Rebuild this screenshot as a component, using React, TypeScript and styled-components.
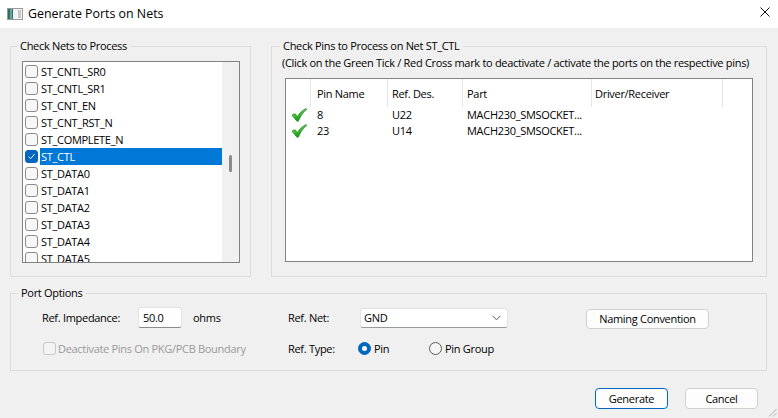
import React from "react";
import styled, { createGlobalStyle, css } from "styled-components";

const FONT = `"Open Sans", "Noto Sans", sans-serif`;
const FS = "11px";
const LS = "-0.3px";

const Global = createGlobalStyle`
  html, body { margin: 0; padding: 0; background: #f0f0f0; }
  body { font-family: ${FONT}; font-size: ${FS}; letter-spacing: ${LS}; color: #000; }
  #root { width: 778px; height: 418px; }
  * { box-sizing: border-box; }
`;

const Window = styled.div`
  width: 778px;
  height: 418px;
  background: #f0f0f0;
  display: flex;
  flex-direction: column;
  position: relative;
  overflow: hidden;
`;

const TitleBar = styled.div`
  height: 28px;
  flex: none;
  background: #fff;
  display: flex;
  align-items: center;
  padding-left: 7px;
`;

const TitleText = styled.span`
  margin-left: 5px;
  font-size: 12.4px;
  letter-spacing: 0;
  color: #000;
  line-height: 16px;
`;

const CloseBox = styled.div`
  margin-left: auto;
  margin-right: 8px;
  width: 10px;
  height: 10px;
  display: flex;
  margin-top: -4px;
`;

const Body = styled.div`
  flex: 1;
  padding: 10px 11px 0 10px;
  display: flex;
  flex-direction: column;
`;

const TopRow = styled.div`
  display: grid;
  grid-template-columns: 241px 496px;
  column-gap: 20px;
  height: 239px;
`;

const Group = styled.fieldset<{ $pad: string }>`
  margin: 0;
  border: 1px solid #dcdcdc;
  padding: ${(p) => p.$pad};
  min-width: 0;
  display: flex;
  flex-direction: column;
`;

const OptionsGroup = styled(Group)`
  margin-top: 8px;
  height: 86px;
`;

const Legend = styled.legend<{ $ml: number }>`
  padding: 0 3px;
  margin-left: ${(p) => p.$ml}px;
  line-height: 16px;
  height: 16px;
`;

/* ---------- net list ---------- */
const ListBox = styled.div`
  width: 218px;
  height: 202px;
  border: 1px solid #828282;
  background: #fff;
  display: flex;
`;

const ListItems = styled.div`
  flex: 1;
  overflow: hidden;
  padding-top: 1px;
`;

const ListRow = styled.div`
  height: 17px;
  display: flex;
  align-items: center;
`;

const Box = styled.span<{ $checked?: boolean; $disabled?: boolean }>`
  width: 13px;
  height: 13px;
  flex: none;
  border-radius: 3px;
  border: 1px solid #8a8a8a;
  background: #f7f7f7;
  display: flex;
  align-items: center;
  justify-content: center;
  ${(p) =>
    p.$checked &&
    css`
      background: #0067c0;
      border-color: #0067c0;
    `}
  ${(p) =>
    p.$disabled &&
    css`
      border-color: #c8c8c8;
      background: #f3f3f3;
      margin-left: 1px;
    `}
`;

const RowCheck = styled(Box)`
  margin-left: 2px;
`;

const ItemLabel = styled.span<{ $selected?: boolean }>`
  flex: 1;
  height: 17px;
  line-height: 17px;
  margin-left: 2px;
  padding-left: 1px;
  white-space: nowrap;
  ${(p) =>
    p.$selected &&
    css`
      background: #0078d7;
      color: #fff;
    `}
`;

const ScrollBar = styled.div`
  width: 17px;
  flex: none;
  background: #f0f0f0;
  padding-top: 93px;
  padding-left: 7px;
`;

const Thumb = styled.div`
  width: 3px;
  height: 17px;
  border-radius: 2px;
  background: #8a8a8a;
`;

/* ---------- pins table ---------- */
const Hint = styled.div`
  line-height: 16px;
  height: 16px;
  white-space: nowrap;
`;

const Table = styled.div`
  margin-top: 7px;
  margin-left: 3px;
  width: 468px;
  height: 184px;
  border: 1px solid #828282;
  background: #fff;
`;

const cols = "25px 77px 75px 129px 131px 1fr";

const HeaderRow = styled.div`
  display: grid;
  grid-template-columns: ${cols};
  height: 28px;
`;

const HeadCell = styled.div<{ $pl?: number }>`
  border-right: 1px solid #e5e5e5;
  display: flex;
  align-items: center;
  padding-left: ${(p) => p.$pl ?? 5}px;
  white-space: nowrap;
  &:last-child { border-right: none; }
`;

const DataRow = styled.div`
  display: grid;
  grid-template-columns: ${cols};
  height: 16px;
  align-items: center;
  white-space: nowrap;
`;

const DataCell = styled.div<{ $pl?: number }>`
  padding-left: ${(p) => p.$pl ?? 5}px;
  line-height: 16px;
  overflow: hidden;
`;

const IconCell = styled.div`
  padding-left: 5px;
  display: flex;
  align-items: center;
  height: 16px;
`;

/* ---------- port options ---------- */
const OptionsGrid = styled.div`
  display: grid;
  grid-template-columns: 246px 70px 228px auto;
  grid-template-rows: 21px 21px;
  row-gap: 10px;
  align-items: center;
`;

const Field = styled.div`
  display: flex;
  align-items: center;
`;

const FieldLabel = styled.span<{ $w?: number }>`
  width: ${(p) => (p.$w ? `${p.$w}px` : "auto")};
  line-height: 16px;
  white-space: nowrap;
`;

const TextInput = styled.div`
  width: 44px;
  height: 21px;
  background: #fff;
  border: 1px solid #e3e3e3;
  border-bottom-color: #8a8a8a;
  border-radius: 3px;
  padding-left: 4px;
  line-height: 19px;
`;

const Unit = styled.span`
  margin-left: 11px;
  line-height: 16px;
`;

const Select = styled.div`
  margin-left: 2px;
  width: 148px;
  height: 20px;
  background: #fff;
  border: 1px solid #e3e3e3;
  border-bottom-color: #9a9a9a;
  border-radius: 3px;
  padding: 0 6px 0 3px;
  display: flex;
  align-items: center;
  justify-content: space-between;
`;

const DisabledText = styled.span`
  margin-left: 2px;
  color: #9a9a9a;
  line-height: 16px;
  white-space: nowrap;
`;

const RadioOption = styled.div<{ $w?: number }>`
  display: flex;
  align-items: center;
  width: ${(p) => (p.$w ? `${p.$w}px` : "auto")};
`;

const RadioDot = styled.span<{ $on?: boolean }>`
  width: 13px;
  height: 13px;
  border-radius: 50%;
  flex: none;
  border: 1px solid #5a5a5a;
  background: #f5f5f5;
  display: flex;
  align-items: center;
  justify-content: center;
  ${(p) =>
    p.$on &&
    css`
      border-color: #0067c0;
      background: #0067c0;
      &::after {
        content: "";
        width: 5px;
        height: 5px;
        border-radius: 50%;
        background: #fff;
      }
    `}
`;

const RadioText = styled.span`
  margin-left: 3px;
  line-height: 16px;
  white-space: nowrap;
`;

const Button = styled.button<{ $default?: boolean; $w: number; $h: number }>`
  font-family: ${FONT};
  font-size: ${FS};
  letter-spacing: ${LS};
  color: #000;
  width: ${(p) => p.$w}px;
  height: ${(p) => p.$h}px;
  background: #fdfdfd;
  border: 1px solid #d0d0d0;
  border-radius: 4px;
  padding: 0;
  line-height: 16px;
  ${(p) =>
    p.$default &&
    css`
      border-color: #0067c0;
    `}
`;

const NamingButton = styled(Button)`
  margin-top: 2px;
`;

const ButtonRow = styled.div`
  display: flex;
  justify-content: flex-end;
  gap: 17px;
  margin-top: 17px;
  padding-right: 9px;
`;

const Grip = styled.svg`
  position: absolute;
  right: 1px;
  bottom: 1px;
`;

/* ---------- icons ---------- */
const WinIcon = () => (
  <svg width="16" height="12" viewBox="0 0 16 12">
    <rect x="0.5" y="0.5" width="15" height="11" fill="#f4f4f4" stroke="#9a9a9a" />
    <rect x="1" y="1" width="5" height="10" fill="#2f6f6a" />
    <rect x="3" y="1" width="2" height="10" fill="#6aa79a" />
    <rect x="11" y="2" width="3" height="8" fill="#c8c8c8" />
  </svg>
);

const CloseIcon = () => (
  <svg width="10" height="10" viewBox="0 0 10 10">
    <path d="M0.5 0.5 L9.5 9.5 M9.5 0.5 L0.5 9.5" stroke="#111" strokeWidth="1" fill="none" />
  </svg>
);

const TickMark = () => (
  <svg width="9" height="9" viewBox="0 0 9 9">
    <path d="M1.5 4.6 L3.6 6.6 L7.6 2.2" stroke="#fff" strokeWidth="1" fill="none" />
  </svg>
);

const GreenTick = () => (
  <svg width="16" height="14" viewBox="0 0 16 14">
    <defs>
      <linearGradient id="gt" x1="0" y1="0" x2="0.4" y2="1">
        <stop offset="0" stopColor="#8fe86a" />
        <stop offset="0.5" stopColor="#3cc430" />
        <stop offset="1" stopColor="#17901a" />
      </linearGradient>
    </defs>
    <path
      d="M1 7.2 C2.2 6.3 3.3 5.8 4.2 5.8 L6.4 8.6 C8.6 5 11.4 2.1 15.2 0.6 L15.6 1.4 C12.4 3.9 9.6 7.6 7.4 13.2 L5.9 13.2 Z"
      fill="url(#gt)"
      stroke="#2a8a22"
      strokeWidth="0.7"
      strokeLinejoin="round"
    />
  </svg>
);

const Chevron = () => (
  <svg width="9" height="6" viewBox="0 0 9 6">
    <path d="M0.5 0.8 L4.5 4.8 L8.5 0.8" stroke="#555" strokeWidth="1" fill="none" />
  </svg>
);

const nets = [
  "ST_CNTL_SR0",
  "ST_CNTL_SR1",
  "ST_CNT_EN",
  "ST_CNT_RST_N",
  "ST_COMPLETE_N",
  "ST_CTL",
  "ST_DATA0",
  "ST_DATA1",
  "ST_DATA2",
  "ST_DATA3",
  "ST_DATA4",
  "ST_DATA5",
];

const pins = [
  { pin: "8", ref: "U22", part: "MACH230_SMSOCKET..." },
  { pin: "23", ref: "U14", part: "MACH230_SMSOCKET..." },
];

export default function App() {
  return (
    <>
      <Global />
      <Window>
        <TitleBar>
          <WinIcon />
          <TitleText>Generate Ports on Nets</TitleText>
          <CloseBox>
            <CloseIcon />
          </CloseBox>
        </TitleBar>
        <Body>
          <TopRow>
            <Group $pad="7px 10px 13px 11px">
              <Legend $ml={-5}>Check Nets to Process</Legend>
              <ListBox>
                <ListItems>
                  {nets.map((n) => {
                    const sel = n === "ST_CTL";
                    return (
                      <ListRow key={n}>
                        <RowCheck $checked={sel}>{sel && <TickMark />}</RowCheck>
                        <ItemLabel $selected={sel}>{n}</ItemLabel>
                      </ListRow>
                    );
                  })}
                </ListItems>
                <ScrollBar>
                  <Thumb />
                </ScrollBar>
              </ListBox>
            </Group>
            <Group $pad="1px 13px 14px 10px">
              <Legend $ml={-2}>Check Pins to Process on Net ST_CTL</Legend>
              <Hint>
                (Click on the Green Tick / Red Cross mark to deactivate / activate the ports on the
                respective pins)
              </Hint>
              <Table>
                <HeaderRow>
                  <HeadCell />
                  <HeadCell $pl={6}>Pin Name</HeadCell>
                  <HeadCell $pl={4}>Ref. Des.</HeadCell>
                  <HeadCell $pl={4}>Part</HeadCell>
                  <HeadCell $pl={3}>Driver/Receiver</HeadCell>
                  <HeadCell />
                </HeaderRow>
                {pins.map((p) => (
                  <DataRow key={p.pin}>
                    <IconCell>
                      <GreenTick />
                    </IconCell>
                    <DataCell $pl={6}>{p.pin}</DataCell>
                    <DataCell $pl={4}>{p.ref}</DataCell>
                    <DataCell $pl={4}>{p.part}</DataCell>
                    <DataCell />
                    <DataCell />
                  </DataRow>
                ))}
              </Table>
            </Group>
          </TopRow>
          <OptionsGroup $pad="6px 10px 11px 31px">
            <Legend $ml={-24}>Port Options</Legend>
            <OptionsGrid>
              <Field>
                <FieldLabel $w={96}>Ref. Impedance:</FieldLabel>
                <TextInput>50.0</TextInput>
                <Unit>ohms</Unit>
              </Field>
              <FieldLabel>Ref. Net:</FieldLabel>
              <Field>
                <Select>
                  <span>GND</span>
                  <Chevron />
                </Select>
              </Field>
              <Field>
                <NamingButton $w={123} $h={20}>
                  Naming Convention
                </NamingButton>
              </Field>

              <Field>
                <Box $disabled />
                <DisabledText>Deactivate Pins On PKG/PCB Boundary</DisabledText>
              </Field>
              <FieldLabel>Ref. Type:</FieldLabel>
              <Field>
                <RadioOption $w={71}>
                  <RadioDot $on />
                  <RadioText>Pin</RadioText>
                </RadioOption>
                <RadioOption>
                  <RadioDot />
                  <RadioText>Pin Group</RadioText>
                </RadioOption>
              </Field>
              <div />
            </OptionsGrid>
          </OptionsGroup>
          <ButtonRow>
            <Button $default $w={73} $h={21}>
              Generate
            </Button>
            <Button $w={73} $h={21}>
              Cancel
            </Button>
          </ButtonRow>
        </Body>
        <Grip width="9" height="9" viewBox="0 0 9 9">
          <path d="M8.5 1 L1 8.5 M8.5 5 L5 8.5" stroke="#b0b0b0" strokeWidth="1" />
        </Grip>
      </Window>
    </>
  );
}
